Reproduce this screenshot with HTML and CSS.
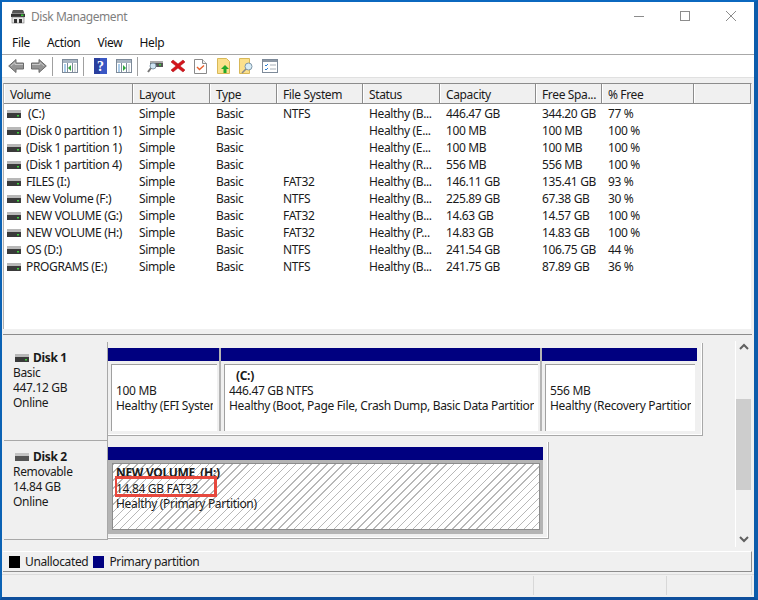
FILE: index.html
```html
<!DOCTYPE html>
<html lang="en">
<head>
<meta charset="utf-8">
<title>Disk Management</title>
<link rel="stylesheet" href="styles.css">
</head>
<body>
<svg class="defs" width="0" height="0" aria-hidden="true">
  <symbol id="drive" viewBox="0 0 14 8">
    <rect x="0" y="0" width="14" height="3" fill="#b8b8b8"/>
    <rect x="0" y="3" width="14" height="5" fill="#3a3a3a"/>
    <rect x="10" y="5" width="2" height="1.5" fill="#3fd03f"/>
  </symbol>
  <symbol id="drive-off" viewBox="0 0 14 8">
    <rect x="0" y="0" width="14" height="3" fill="#c4c4c4"/>
    <rect x="0" y="3" width="14" height="5" fill="#555"/>
  </symbol>
  <symbol id="arrow" viewBox="0 0 16 16">
    <path d="M.7 8 8 1.500V5h7.500v6H8v3.500z" fill="#949494" stroke="#6a6a6a" stroke-width="1"/>
    <path d="M3 8 7 4.500V6.500h8" fill="none" stroke="#c8c8c8"/>
  </symbol>
  <symbol id="pane" viewBox="0 0 16 14">
    <rect x=".5" y=".5" width="15" height="13" fill="#fff" stroke="#7d8a99"/>
    <rect x="1" y="1" width="14" height="3" fill="#a9b5c2"/>
    <path d="M5.500 4v10M10.500 4v10" stroke="#7d8a99"/>
    <path d="M2 6h2M2 8h2M2 10h2M2 12h2" stroke="#5a9bd6"/>
    <path d="M12 6h2M12 8h2M12 10h2M12 12h2" stroke="#b0b8c0"/>
  </symbol>
</svg>
<div class="window">
  <header class="titlebar">
    <svg class="app-icon" viewBox="0 0 16 15" width="16" height="15">
      <path d="M3 1h10l2 5H1z" fill="#8a8a8a"/>
      <path d="M3 1h10l1 3H2z" fill="#555"/>
      <rect x="1" y="5" width="14" height="3" fill="#333"/>
      <rect x="11" y="5.500" width="2.500" height="1.500" fill="#37d037"/>
      <rect x="2" y="8" width="12" height="6" fill="#e8e8e8" stroke="#777" stroke-width=".6"/>
      <rect x="4" y="10" width="3" height="4" fill="#333"/>
      <rect x="9" y="10" width="3" height="4" fill="#333"/>
    </svg>
    <span class="title">Disk Management</span>
    <div class="controls">
      <svg width="10" height="10" viewBox="0 0 10 10"><path d="M0 5.500h10" stroke="#8c8c8c"/></svg>
      <svg width="10" height="10" viewBox="0 0 10 10"><rect x=".5" y=".5" width="9" height="9" fill="none" stroke="#8c8c8c"/></svg>
      <svg width="10" height="10" viewBox="0 0 10 10"><path d="M0 0l10 10M10 0 0 10" stroke="#8c8c8c"/></svg>
    </div>
  </header>
  <nav class="menubar"><span>File</span><span>Action</span><span>View</span><span>Help</span></nav>
  <div class="toolbar">
    <span class="tool"><svg width="16" height="16"><use href="#arrow"/></svg></span>
    <span class="tool"><svg class="flip" width="16" height="16"><use href="#arrow"/></svg></span>
    <span class="sep"></span>
    <span class="tool"><svg width="16" height="14" viewBox="0 0 16 14"><use href="#pane" width="16" height="14"/><path d="M9 6v6L6 9z" fill="#2fa83a"/></svg></span>
    <span class="sep"></span>
    <span class="tool"><svg width="13" height="16" viewBox="0 0 13 16"><rect width="13" height="16" fill="#3a57c4"/><rect width="6" height="16" fill="#2a3f9e"/><text x="6.500" y="13" class="help-mark">?</text></svg></span>
    <span class="tool"><svg width="16" height="14" viewBox="0 0 16 14"><use href="#pane" width="16" height="14"/><path d="M7 6v6l3-3z" fill="#2fa83a"/></svg></span>
    <span class="sep"></span>
    <span class="tool"><svg width="16" height="16" viewBox="0 0 16 16"><rect x="3" y="4" width="13" height="5" fill="#555"/><rect x="3" y="3" width="13" height="2" fill="#aaa"/><rect x="12" y="6" width="2" height="1.500" fill="#3fd03f"/><circle cx="6" cy="8" r="3" fill="#cfe4f2" stroke="#7f97a8"/><path d="M4 10 1 14" stroke="#777" stroke-width="2"/></svg></span>
    <span class="tool"><svg width="14" height="14" viewBox="0 0 14 14"><path d="M2 1l5 4 5-4 2 2-5 4 5 4-2 2-5-4-5 4-2-2 5-4-5-4z" fill="#d4141c" stroke="#a80c12" stroke-width=".5"/></svg></span>
    <span class="tool"><svg width="13" height="15" viewBox="0 0 13 15"><path d="M.5.500h8l4 4v10H.5z" fill="#fff" stroke="#8a8a8a"/><path d="M8.500.500v4h4" fill="#eee" stroke="#8a8a8a"/><path d="M3 8l2.500 2.500L10 6.500" fill="none" stroke="#e8602c" stroke-width="1.400"/></svg></span>
    <span class="tool"><svg width="13" height="16" viewBox="0 0 13 16"><path d="M.5.500h9l3 3v12H.5z" fill="#fbe08c" stroke="#d8b858"/><path d="M8 7l4 4H9.500v4h-3v-4H4z" fill="#22a82a"/></svg></span>
    <span class="tool"><svg width="15" height="16" viewBox="0 0 15 16"><path d="M.5.500h10v15H.5z" fill="#fbe08c" stroke="#d8b858"/><circle cx="9.500" cy="8.500" r="3.500" fill="#d8ecf6" stroke="#7f97a8"/><path d="M7 11l-4 4" stroke="#8a8a8a" stroke-width="1.600"/></svg></span>
    <span class="tool"><svg width="16" height="14" viewBox="0 0 16 14"><rect x=".5" y=".5" width="15" height="13" fill="#fff" stroke="#7d8a99"/><rect x="1" y="1" width="14" height="2" fill="#8d98a5"/><path d="M3 6l1 1 2-2M3 10l1 1 2-2" fill="none" stroke="#2f7fd0"/><path d="M8 6h6M8 10h6" stroke="#a8b0b8"/></svg></span>
  </div>

  <section class="list">
    <div class="row head">
      <span>Volume</span><span>Layout</span><span>Type</span><span>File System</span><span>Status</span><span>Capacity</span><span>Free Spa...</span><span>% Free</span><span></span>
    </div>
    <div class="rows">
      <div class="row"><span class="vol"><svg width="14" height="8"><use href="#drive"/></svg><b class="sp">(C:)</b></span><span>Simple</span><span>Basic</span><span>NTFS</span><span>Healthy (B...</span><span>446.47 GB</span><span>344.20 GB</span><span>77 %</span></div>
      <div class="row"><span class="vol"><svg width="14" height="8"><use href="#drive"/></svg><b>(Disk 0 partition 1)</b></span><span>Simple</span><span>Basic</span><span></span><span>Healthy (E...</span><span>100 MB</span><span>100 MB</span><span>100 %</span></div>
      <div class="row"><span class="vol"><svg width="14" height="8"><use href="#drive"/></svg><b>(Disk 1 partition 1)</b></span><span>Simple</span><span>Basic</span><span></span><span>Healthy (E...</span><span>100 MB</span><span>100 MB</span><span>100 %</span></div>
      <div class="row"><span class="vol"><svg width="14" height="8"><use href="#drive"/></svg><b>(Disk 1 partition 4)</b></span><span>Simple</span><span>Basic</span><span></span><span>Healthy (R...</span><span>556 MB</span><span>556 MB</span><span>100 %</span></div>
      <div class="row"><span class="vol"><svg width="14" height="8"><use href="#drive"/></svg><b>FILES (I:)</b></span><span>Simple</span><span>Basic</span><span>FAT32</span><span>Healthy (B...</span><span>146.11 GB</span><span>135.41 GB</span><span>93 %</span></div>
      <div class="row"><span class="vol"><svg width="14" height="8"><use href="#drive"/></svg><b>New Volume (F:)</b></span><span>Simple</span><span>Basic</span><span>NTFS</span><span>Healthy (B...</span><span>225.89 GB</span><span>67.38 GB</span><span>30 %</span></div>
      <div class="row"><span class="vol"><svg width="14" height="8"><use href="#drive"/></svg><b>NEW VOLUME (G:)</b></span><span>Simple</span><span>Basic</span><span>FAT32</span><span>Healthy (B...</span><span>14.63 GB</span><span>14.57 GB</span><span>100 %</span></div>
      <div class="row"><span class="vol"><svg width="14" height="8"><use href="#drive"/></svg><b>NEW VOLUME (H:)</b></span><span>Simple</span><span>Basic</span><span>FAT32</span><span>Healthy (P...</span><span>14.83 GB</span><span>14.83 GB</span><span>100 %</span></div>
      <div class="row"><span class="vol"><svg width="14" height="8"><use href="#drive"/></svg><b>OS (D:)</b></span><span>Simple</span><span>Basic</span><span>NTFS</span><span>Healthy (B...</span><span>241.54 GB</span><span>106.75 GB</span><span>44 %</span></div>
      <div class="row"><span class="vol"><svg width="14" height="8"><use href="#drive"/></svg><b>PROGRAMS (E:)</b></span><span>Simple</span><span>Basic</span><span>NTFS</span><span>Healthy (B...</span><span>241.75 GB</span><span>87.89 GB</span><span>36 %</span></div>
    </div>
  </section>

  <section class="graph">
    <div class="disks">
      <div class="disk">
        <div class="disk-label">
          <div class="disk-name"><svg width="14" height="8"><use href="#drive"/></svg><strong>Disk 1</strong></div>
          <div>Basic</div><div>447.12 GB</div><div>Online</div>
        </div>
        <div class="parts">
          <div class="part w1">
            <div class="bar"></div>
            <div class="box"><div class="line">&nbsp;</div><div class="line">100 MB</div><div class="line">Healthy (EFI System Partition)</div></div>
          </div>
          <div class="part w2">
            <div class="bar"></div>
            <div class="box"><div class="line name indent">(C:)</div><div class="line">446.47 GB NTFS</div><div class="line">Healthy (Boot, Page File, Crash Dump, Basic Data Partition)</div></div>
          </div>
          <div class="part w3">
            <div class="bar"></div>
            <div class="box"><div class="line">&nbsp;</div><div class="line">556 MB</div><div class="line">Healthy (Recovery Partition)</div></div>
          </div>
        </div>
      </div>
      <div class="disk">
        <div class="disk-label">
          <div class="disk-name"><svg width="14" height="8"><use href="#drive-off"/></svg><strong>Disk 2</strong></div>
          <div>Removable</div><div>14.84 GB</div><div>Online</div>
        </div>
        <div class="parts single">
          <div class="part w4">
            <div class="bar"></div>
            <div class="box hatched">
              <div class="line name">NEW VOLUME&nbsp; (H:)</div><div class="line">14.84 GB FAT32</div><div class="line">Healthy (Primary Partition)</div>
              <div class="callout"></div>
            </div>
          </div>
        </div>
      </div>
    </div>
    <div class="scrollbar">
      <svg width="10" height="8" viewBox="0 0 10 8"><path d="M1 6l4-4 4 4" fill="none" stroke="#606060" stroke-width="2"/></svg>
      <div class="track"><div class="thumb"></div></div>
      <svg width="10" height="8" viewBox="0 0 10 8"><path d="M1 2l4 4 4-4" fill="none" stroke="#606060" stroke-width="2"/></svg>
    </div>
  </section>

  <div class="legend">
    <i class="swatch black"></i><span class="unalloc">Unallocated</span>
    <i class="swatch navy"></i><span>Primary partition</span>
  </div>
  <footer class="status"><span class="s1"></span><span class="s2"></span><span class="s3"></span></footer>
</div>
</body>
</html>
```
FILE: styles.css
```css
* { box-sizing: border-box; }
html, body { margin: 0; height: 100%; }
body {
  font-family: "Noto Sans", "Open Sans", "Liberation Sans", sans-serif;
  font-size: 12px;
  color: #1a1a1a;
  background: #0b62b4;
  overflow: hidden;
}
.defs { position: absolute; }
.window {
  width: 758px;
  height: 600px;
  border-style: solid;
  border-color: #0b68bf #0d5cab #0f4f9c #0b62b4;
  border-width: 2px 4px 3px 2px;
  background: #f0f0f0;
  display: flex;
  flex-direction: column;
}
.titlebar {
  height: 29px;
  flex: none;
  background: #fff;
  display: flex;
  align-items: center;
  padding: 0 0 0 8px;
}
.app-icon { flex: none; }
.title { margin-left: 5px; color: #7f7f7f; letter-spacing: -.45px; }
.controls {
  margin-left: auto;
  display: flex;
  gap: 36px;
  padding-right: 18px;
  margin-top: -1px;
}
.menubar {
  height: 24px;
  flex: none;
  background: #fff;
  border-bottom: 1px solid #a8a8a8;
  display: flex;
  align-items: center;
  padding-left: 10px;
  gap: 17px;
  color: #111;
  letter-spacing: -.33px;
}
.toolbar {
  height: 23px;
  flex: none;
  background: #fff;
  border-bottom: 1px solid #e0e0e0;
  display: flex;
  align-items: center;
  padding-left: 2px;
}
.tool { width: 23px; display: flex; justify-content: center; }
.flip { transform: scaleX(-1); }
.sep { width: 1px; height: 19px; background: #a0a0a0; margin: 0 5px 0 2px; }
.help-mark { font: bold 14px "Liberation Serif", serif; fill: #fff; text-anchor: middle; }

.list {
  margin: 5px 2px 0 1px;
  height: 246px;
  flex: none;
  background: #fff;
  border-top: 1px solid #8c8c8c;
  border-left: 1px solid #b0b0b0;
  border-right: 1px solid #f0f0f0;
  box-shadow: 0 5px 0 #f0f0f0, 0 6px 0 #8c8c8c;
}
.row {
  display: grid;
  grid-template-columns: 129px 77px 67px 86px 77px 96px 66px 92px 1fr;
  height: 17px;
  align-items: center;
  white-space: nowrap;
  letter-spacing: -.36px;
}
.row > span { padding-left: 6px; overflow: hidden; }
.row.head {
  height: 20px;
  background: #f0f0f0;
  border-bottom: 1px solid #8c8c8c;
}
.row.head > span {
  height: 19px;
  line-height: 16px;
  padding-top: 3px;
  border-left: 1px solid #fff;
  border-right: 1px solid #8c8c8c;
  padding-left: 5px;
}
.rows { padding-top: 1px; }
.row > .vol { display: flex; align-items: center; padding-left: 3px; }
.vol b { font-weight: 400; margin-left: 5px; }
.vol b.sp { margin-left: 7px; }

.graph {
  margin-top: 12px;
  flex: 1;
  min-height: 0;
  display: flex;
  padding-left: 2px;
}
.disks { flex: 1; padding-top: 1px; }
.disk { display: flex; height: 99px; }
.disk-label {
  width: 104px;
  height: 99px;
  flex: none;
  line-height: 15px;
  padding: 8px 0 0 9px;
  border-bottom: 1px solid #a8a8a8;
  border-right: 1px solid #a8a8a8;
  letter-spacing: -.33px;
}
.disk-name { display: flex; align-items: center; }
.disk-name svg { margin: 0 4px 0 2px; }
.disk-name strong { font-weight: 700; }
.parts {
  display: flex;
  width: 595px;
  height: 93px;
  margin-top: 1px;
  padding: 5px 5px 4px 0;
  background: #f0f0f0;
  border-right: 1px solid #a8a8a8;
  border-bottom: 1px solid #a8a8a8;
  box-shadow: inset -1px -1px 0 #fff;
}
.parts.single { width: 441px; height: 97px; }
.part { display: flex; flex-direction: column; border-right: 2px solid #b4b4b4; background: #f0f0f0; }
.w1 { width: 113px; }
.w2 { width: 321px; }
.w3 { width: 155px; border-right: 0; }
.w4 { width: 435px; border-right: 0; background: #b4b4b4; }
.bar { height: 13px; flex: none; background: #000080; margin-bottom: 3px; }
.box {
  position: relative;
  flex: 1;
  margin: 0 2px 0 3px;
  padding: 3px 4px 0 4px;
  background: #fff;
  border-left: 1px solid #a0a0a0;
  border-top: 1px solid #a0a0a0;
  line-height: 15px;
  overflow: hidden;
  letter-spacing: -.33px;
}
.line { white-space: nowrap; overflow: hidden; height: 15px; }
.name { font-weight: 700; }
.indent { padding-left: 7px; }
.hatched {
  margin: 0 3px 4px 4px;
  padding: 1px 0 0 3px;
  border: 1px solid #8c8c8c;
  background: repeating-linear-gradient(135deg, #b8b8b8 0 1px, #fff 1px 5.6px);
  overflow: visible;
}
.hatched .line { height: 15.500px; }
.callout {
  position: absolute;
  left: 2px;
  top: 12px;
  width: 102px;
  height: 21px;
  border: 3px solid #e7483d;
  border-left-width: 2px;
}
.scrollbar {
  width: 16px;
  flex: none;
  border-left: 1px solid #fff;
  display: flex;
  flex-direction: column;
  align-items: center;
  padding-top: 2px;
  height: 206px;
  margin-right: 3px;
}
.track { flex: 1; width: 15px; padding-top: 48px; }
.thumb { height: 91px; background: #cdcdcd; }
.scrollbar svg:last-child { margin-bottom: 4px; }

.legend {
  height: 21px;
  flex: none;
  margin: 0 2px 0 1px;
  background: #f0f0f0;
  border-top: 1px solid #fff;
  border-right: 1px solid #8c8c8c;
  border-bottom: 1px solid #8c8c8c;
  display: flex;
  align-items: center;
  padding-left: 6px;
  letter-spacing: -.36px;
}
.swatch { width: 11px; height: 12px; margin-right: 5px; }
.black { background: #000; }
.navy { background: #000080; }
.unalloc { margin-right: 5px; }
.status {
  height: 23px;
  flex: none;
  margin-top: 2px;
  border-top: 1px solid #dcdcdc;
  display: flex;
  padding: 1px 0 2px;
}
.status span { border-right: 1px solid #d8d8d8; }
.s1 { width: 532px; }
.s2 { width: 133px; }
.s3 { width: 85px; }
```
